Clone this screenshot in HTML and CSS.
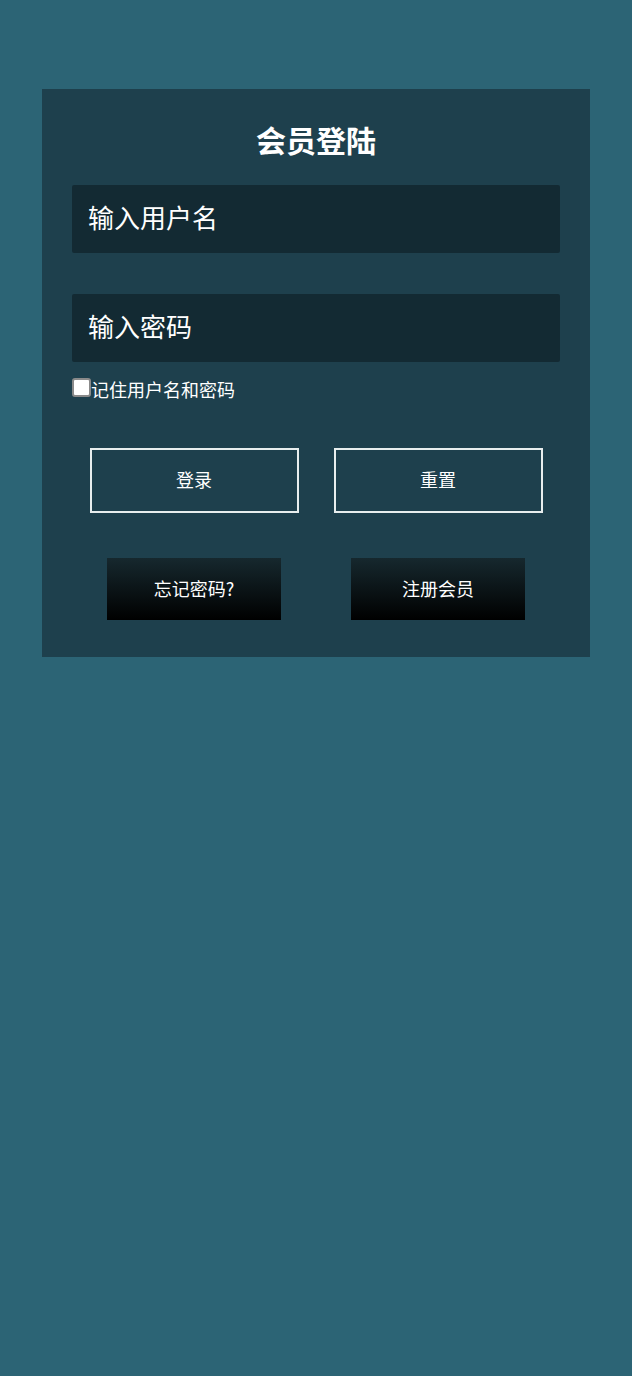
FILE: index.html
```html
<!DOCTYPE html>
<html lang="zh-CN">
<head>
<meta charset="utf-8">
<title>会员登陆</title>
<link rel="stylesheet" href="styles.css">
</head>
<body>
<div class="card">
  <h2 class="title">会员登陆</h2>
  <div class="field">输入用户名</div>
  <div class="field field-second">输入密码</div>
  <label class="remember"><span class="check"></span>记住用户名和密码</label>
  <div class="row row-main">
    <div class="cell"><button class="btn-outline">登录</button></div>
    <div class="cell"><button class="btn-outline">重置</button></div>
  </div>
  <div class="row row-sub">
    <div class="cell"><button class="btn-dark">忘记密码?</button></div>
    <div class="cell"><button class="btn-dark">注册会员</button></div>
  </div>
</div>
</body>
</html>
```
FILE: styles.css
```css
html, body {
  margin: 0;
  padding: 0;
}
body {
  background: #2c6475;
  font-family: "Noto Sans CJK SC", "Noto Sans", sans-serif;
  color: #fff;
  min-height: 1376px;
  padding-top: 89px;
  box-sizing: border-box;
}
.card {
  width: 548px;
  margin: 0 auto 0 42px;
  background: #1e404d;
  padding: 30px 30px 37px;
  box-sizing: border-box;
}
.title {
  margin: 0;
  text-align: center;
  font-size: 30px;
  font-weight: bold;
  line-height: 44px;
  height: 44px;
  margin-top: -2px;
}
.field {
  margin-top: 24px;
  height: 68px;
  box-sizing: border-box;
  background: #132a33;
  border-radius: 2px;
  font-size: 26px;
  line-height: 64px;
  padding: 0 0 4px 16px;
  color: #fff;
}
.field-second {
  margin-top: 41px;
}
.remember {
  display: flex;
  align-items: center;
  margin-top: 16px;
  padding-top: 1px;
  height: 20px;
  font-size: 18px;
  line-height: 20px;
}
.check {
  width: 15px;
  height: 15px;
  border: 2px solid #8a8a8a;
  border-radius: 3px;
  background: #fff;
  margin-top: -3px;
}
.row {
  display: grid;
  grid-template-columns: 1fr 1fr;
}
.cell {
  display: flex;
  justify-content: center;
}
.row-main {
  margin-top: 49px;
}
.row-sub {
  margin-top: 45px;
}
.btn-outline {
  width: 209px;
  height: 65px;
  background: transparent;
  border: 2px solid #e8eeee;
  color: #fff;
  font-family: inherit;
  font-size: 18px;
  padding: 0 0 3px;
}
.btn-dark {
  width: 174px;
  height: 62px;
  border: none;
  background: linear-gradient(to bottom, #16282e, #000);
  color: #fff;
  font-family: inherit;
  font-size: 18px;
  padding: 0 0 3px;
}
```
